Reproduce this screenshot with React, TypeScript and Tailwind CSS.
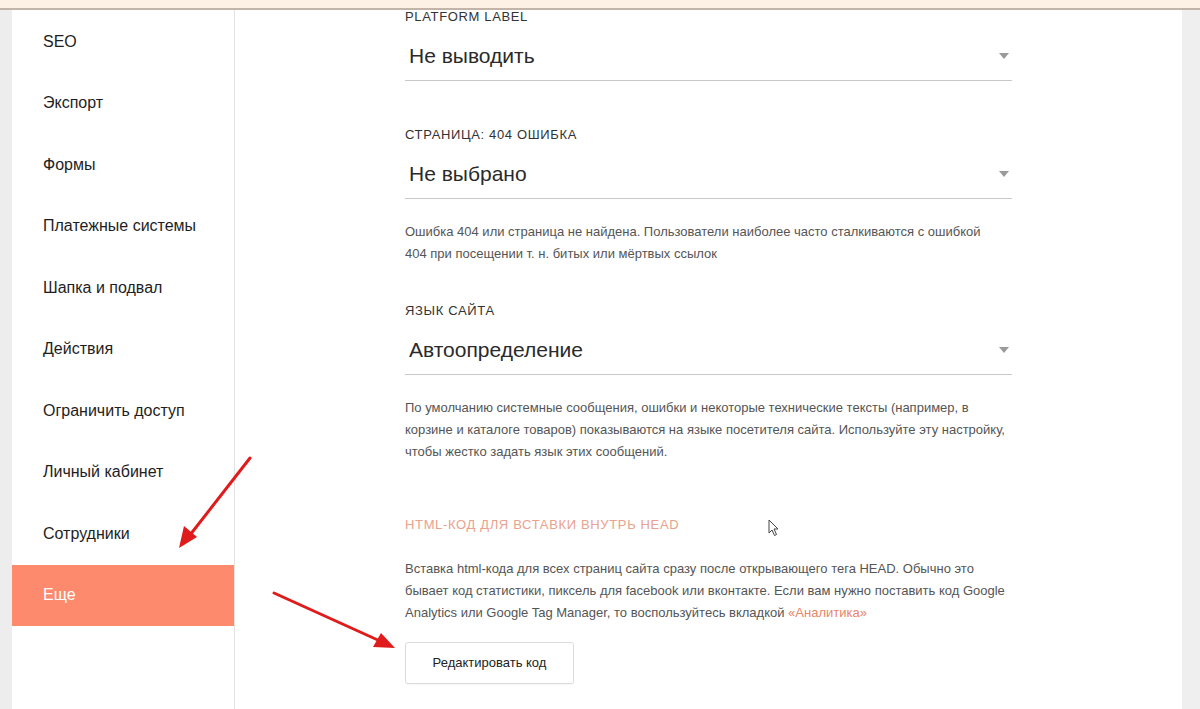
const menu = [
  'SEO',
  'Экспорт',
  'Формы',
  'Платежные системы',
  'Шапка и подвал',
  'Действия',
  'Ограничить доступ',
  'Личный кабинет',
  'Сотрудники',
  'Еще',
]

function Select({ value }: { value: string }) {
  return (
    <div className="flex h-[49px] items-center justify-between border-b border-[#c9c9c9] pl-1 pr-1">
      <span className="text-[21px] text-[#2a2a2a]">{value}</span>
      <svg width="10" height="6" viewBox="0 0 10 6" className="mr-[-1px]">
        <path d="M0 0 L10 0 L5 6 Z" fill="#9a9a9a" />
      </svg>
    </div>
  )
}

function Label({ children, accent }: { children: string; accent?: boolean }) {
  return (
    <div
      className={
        'h-5 text-[13px] leading-5 tracking-[0.05em] uppercase ' +
        (accent ? 'text-[#e8a28e]' : 'text-[#333]')
      }
    >
      {children}
    </div>
  )
}

function Desc({ lines, link }: { lines: string[]; link?: string }) {
  return (
    <div className="text-[13px] leading-[22px] text-[#555]">
      {lines.map((l, i) => (
        <div key={i} className="whitespace-nowrap">
          {l}
          {link && i === lines.length - 1 && <span className="text-[#e8866a]"> {link}</span>}
        </div>
      ))}
    </div>
  )
}

export default function App() {
  return (
    <div className="relative flex h-[709px] w-[1200px] flex-col overflow-hidden bg-white font-['Liberation_Sans',sans-serif]">
      <div className="h-[10px] shrink-0 border-b-2 border-[#c2b4a8] bg-[#fdf0e5]" />
      <div className="flex flex-1">
        <div className="w-[12px] bg-[#ededed]" />
        <aside className="w-[223px] border-r border-[#e3e3e3] pt-[1px]">
          {menu.map((m) => (
            <div
              key={m}
              className={
                'flex h-[61.5px] items-center pl-[31px] text-[16px] ' +
                (m === 'Еще' ? 'bg-[#fd8a6d] text-white' : 'text-[#1e1e1e]')
              }
            >
              {m}
            </div>
          ))}
        </aside>
        <main className="flex-1 overflow-hidden pl-[170px]">
          <div className="mt-[-3px] w-[607px]">
            <Label>Platform label</Label>
            <div className="mt-[5px]">
              <Select value="Не выводить" />
            </div>

            <div className="mt-[44px]">
              <Label>Страница: 404 ошибка</Label>
            </div>
            <div className="mt-[5px]">
              <Select value="Не выбрано" />
            </div>
            <div className="mt-[22px]">
              <Desc
                lines={[
                  'Ошибка 404 или страница не найдена. Пользователи наиболее часто сталкиваются с ошибкой',
                  '404 при посещении т. н. битых или мёртвых ссылок',
                ]}
              />
            </div>

            <div className="mt-[36px]">
              <Label>Язык сайта</Label>
            </div>
            <div className="mt-[5px]">
              <Select value="Автоопределение" />
            </div>
            <div className="mt-[22px]">
              <Desc
                lines={[
                  'По умолчанию системные сообщения, ошибки и некоторые технические тексты (например, в',
                  'корзине и каталоге товаров) показываются на языке посетителя сайта. Используйте эту настройку,',
                  'чтобы жестко задать язык этих сообщений.',
                ]}
              />
            </div>

            <div className="mt-[52px]">
              <Label accent>HTML-код для вставки внутрь HEAD</Label>
            </div>
            <div className="mt-[23px]">
              <Desc
                lines={[
                  'Вставка html-кода для всех страниц сайта сразу после открывающего тега HEAD. Обычно это',
                  'бывает код статистики, пиксель для facebook или вконтакте. Если вам нужно поставить код Google',
                  'Analytics или Google Tag Manager, то воспользуйтесь вкладкой',
                ]}
                link="«Аналитика»"
              />
            </div>
            <button className="mt-[18px] h-[42px] w-[169px] rounded-[3px] border border-[#dcdcdc] bg-white text-[13px] text-[#222] shadow-[0_1px_1px_rgba(0,0,0,0.04)]">
              Редактировать код
            </button>
          </div>
        </main>
        <div className="w-[18px] bg-[#efefef]" />
      </div>

      {/* red annotation arrows */}
      <svg className="pointer-events-none absolute left-0 top-0" width="1200" height="709">
        <line x1="250" y1="458" x2="190" y2="535" stroke="#e01b1b" strokeWidth="3" strokeLinecap="round" />
        <path d="M179 548 L184 526 L197 537 Z" fill="#e01b1b" />
        <line x1="274" y1="593" x2="380" y2="641" stroke="#e01b1b" strokeWidth="3" strokeLinecap="round" />
        <path d="M395 648 L373 647 L381 633 Z" fill="#e01b1b" />
      </svg>

      {/* mouse pointer */}
      <svg className="pointer-events-none absolute left-[768px] top-[519px]" width="12" height="18" viewBox="0 0 12 18">
        <path d="M1 1 L1 14 L4 11 L6.5 16.5 L8.5 15.5 L6 10 L10 10 Z" fill="white" stroke="#444" strokeWidth="1" strokeLinejoin="round" />
      </svg>
    </div>
  )
}
